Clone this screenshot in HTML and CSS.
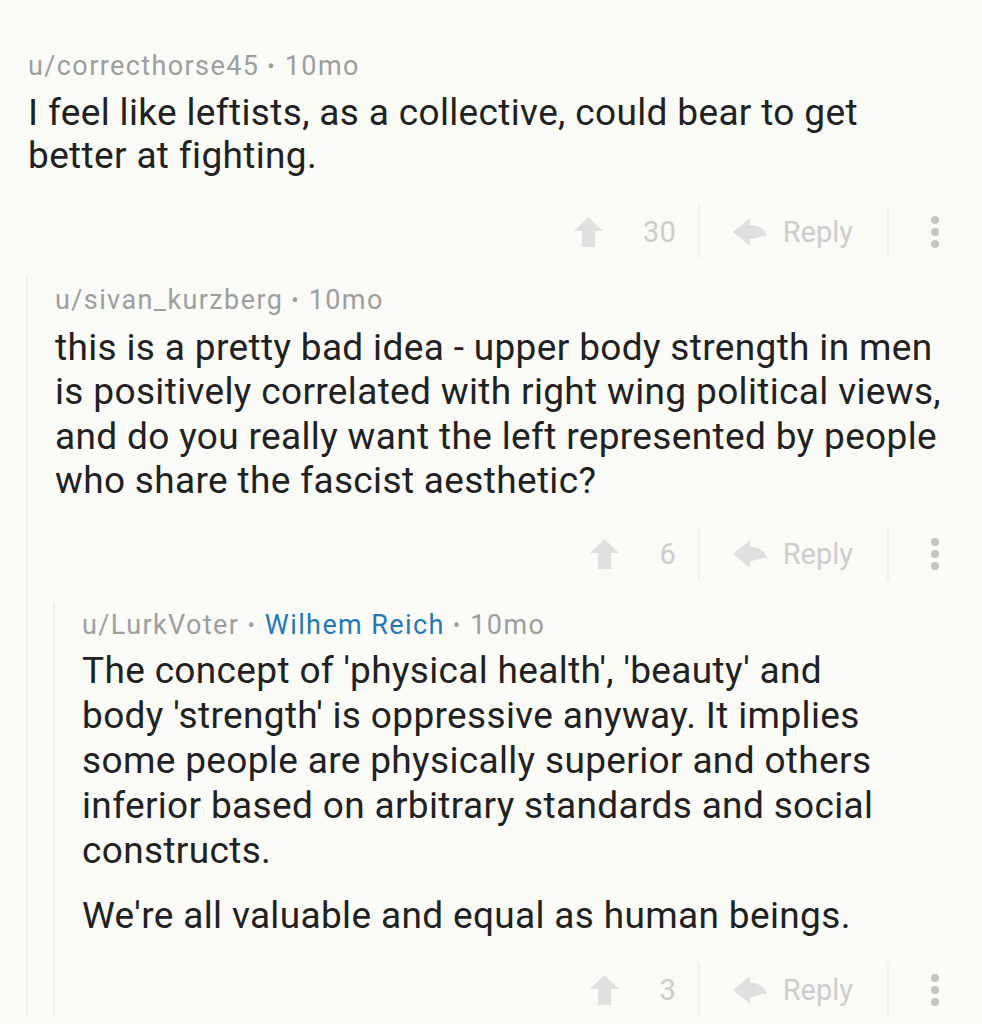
FILE: index.html
```html
<!DOCTYPE html>
<html>
<head>
<meta charset="utf-8">
<link rel="stylesheet" href="styles.css">
</head>
<body>
<div class="thread">
  <div class="comment c1">
    <div class="meta">u/correcthorse45<span class="dot">•</span>10mo</div>
    <div class="body">
      <p>I feel like leftists, as a collective, could bear to get better at fighting.</p>
    </div>
    <div class="actions">
      <div class="vote">
        <svg class="up" viewBox="0 0 31 30" width="31" height="30"><path d="M15.5 0 L30 14 L22 14 L22 30 L9 30 L9 14 L1 14 Z"/></svg>
        <span class="count">30</span>
      </div>
      <div class="sep"></div>
      <div class="reply">
        <svg class="rep" viewBox="0 0 34 30" width="34" height="30"><path d="M0 15 L17 1 L17 8 C26 8 32 11 34 20 C29 17 24 22 17 22 L17 29 Z"/></svg>
        <span>Reply</span>
      </div>
      <div class="sep sep2"></div>
      <div class="more"><i></i><i></i><i></i></div>
    </div>
    <div class="children">
      <div class="comment c2">
        <div class="meta">u/sivan_kurzberg<span class="dot">•</span>10mo</div>
        <div class="body">
          <p>this is a pretty bad idea - upper body strength in men is positively correlated with right wing political views, and do you really want the left represented by people who share the fascist aesthetic?</p>
        </div>
        <div class="actions">
          <div class="vote">
            <svg class="up" viewBox="0 0 31 30" width="31" height="30"><path d="M15.5 0 L30 14 L22 14 L22 30 L9 30 L9 14 L1 14 Z"/></svg>
            <span class="count">6</span>
          </div>
          <div class="sep"></div>
          <div class="reply">
            <svg class="rep" viewBox="0 0 34 30" width="34" height="30"><path d="M0 15 L17 1 L17 8 C26 8 32 11 34 20 C29 17 24 22 17 22 L17 29 Z"/></svg>
            <span>Reply</span>
          </div>
          <div class="sep sep2"></div>
          <div class="more"><i></i><i></i><i></i></div>
        </div>
        <div class="children">
          <div class="comment c3">
            <div class="meta">u/LurkVoter<span class="dot">•</span><span class="flair">Wilhem Reich</span><span class="dot">•</span>10mo</div>
            <div class="body">
              <p>The concept of 'physical health', 'beauty' and body 'strength' is oppressive anyway. It implies some people are physically superior and others inferior based on arbitrary standards and social constructs.</p>
              <p>We're all valuable and equal as human beings.</p>
            </div>
            <div class="actions">
              <div class="vote">
                <svg class="up" viewBox="0 0 31 30" width="31" height="30"><path d="M15.5 0 L30 14 L22 14 L22 30 L9 30 L9 14 L1 14 Z"/></svg>
                <span class="count">3</span>
              </div>
              <div class="sep"></div>
              <div class="reply">
                <svg class="rep" viewBox="0 0 34 30" width="34" height="30"><path d="M0 15 L17 1 L17 8 C26 8 32 11 34 20 C29 17 24 22 17 22 L17 29 Z"/></svg>
                <span>Reply</span>
              </div>
              <div class="sep sep2"></div>
              <div class="more"><i></i><i></i><i></i></div>
            </div>
          </div>
        </div>
      </div>
    </div>
  </div>
</div>
</body>
</html>
```
FILE: styles.css
```css
html, body {
  margin: 0;
  padding: 0;
  background: #fafaf7;
}
body {
  font-family: Roboto, "Noto Sans", sans-serif;
  width: 982px;
  height: 1024px;
  overflow: hidden;
}
.thread {
  padding: 51px 0 0 28px;
}
.meta {
  font-size: 27px;
  line-height: 30px;
  letter-spacing: 1.4px;
  color: #9e9e9e;
}
.meta .dot {
  display: inline-block;
  font-size: 22px;
  letter-spacing: 0;
  margin: 0 10px 0 8px;
  vertical-align: 1px;
}
.flair {
  color: #2379b4;
}
.body {
  margin-top: 9px;
  padding-right: 30px;
  font-size: 37px;
  line-height: 43px;
  letter-spacing: 0.35px;
  color: #212121;
}
.body p {
  margin: 0;
}
.body p + p {
  margin-top: 20px;
}
.c2 > .body {
  margin-top: 10px;
  line-height: 44.3px;
}
.c3 > .body {
  margin-top: 7px;
  line-height: 45px;
  max-width: 830px;
  padding-right: 0;
}
.actions {
  display: flex;
  align-items: center;
  justify-content: flex-end;
  height: 53px;
  margin-top: 28px;
  padding-right: 43px;
  color: #cdcdcd;
  font-size: 29px;
}
.c2 > .actions {
  margin-top: 24px;
}
.c3 > .actions {
  margin-top: 25px;
}
.vote {
  display: flex;
  align-items: center;
  gap: 39px;
}
.up, .rep {
  fill: #e0e0e0;
}
.sep {
  width: 2px;
  align-self: stretch;
  background: #f0f0ec;
  margin: 0 33px 0 22px;
}
.sep2 {
  margin: 0 42px 0 34px;
}
.reply {
  display: flex;
  align-items: center;
  gap: 16px;
}
.more {
  display: flex;
  flex-direction: column;
  gap: 4px;
}
.more i {
  display: block;
  width: 8px;
  height: 8px;
  border-radius: 50%;
  background: #c4c4c4;
}
.children {
  margin-top: 19px;
  margin-left: -2px;
  border-left: 2px solid #efefeb;
  padding-top: 8px;
  padding-left: 27px;
}
.c2 > .children {
  margin-top: 23px;
  padding-top: 7px;
}
```
